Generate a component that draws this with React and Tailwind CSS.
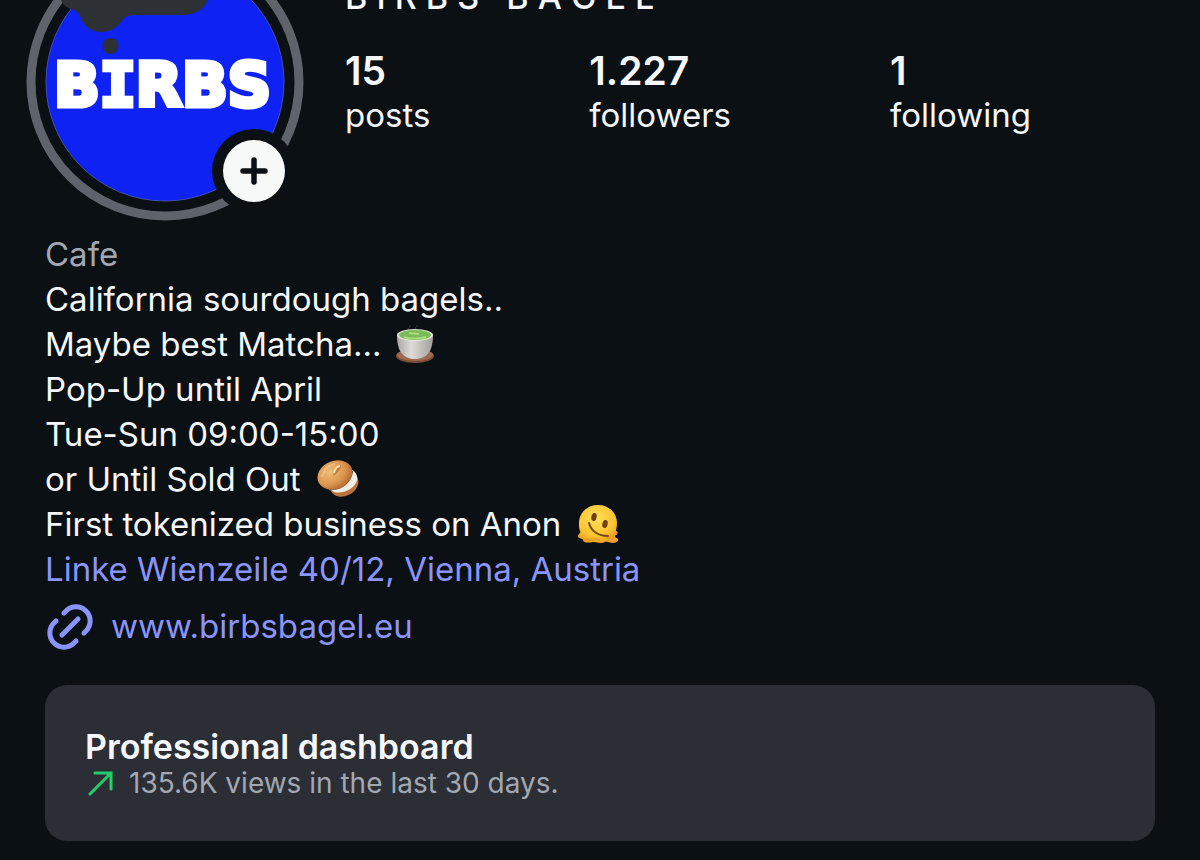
import React from 'react';

const stats = [
  { value: '15', label: 'posts' },
  { value: '1.227', label: 'followers' },
  { value: '1', label: 'following' },
];

const MatchaIcon = () => (
  <svg viewBox="0 0 40 40" className="h-10 w-10 shrink-0" role="img" aria-label="Matcha">
    <defs>
      <linearGradient id="cup" x1="0" x2="1">
        <stop offset="0" stopColor="#a9a8a4" />
        <stop offset="0.4" stopColor="#dddcd8" />
        <stop offset="1" stopColor="#a19f9d" />
      </linearGradient>
    </defs>
    <path d="M14 5c-3-2 3-3 1-5M21 4c-2-2 2-2 1-4" fill="none" stroke="#5d6262" strokeWidth="1" opacity="0.5" />
    <ellipse cx="20" cy="31" rx="19" ry="7" fill="#7c4c36" />
    <ellipse cx="20" cy="30" rx="18" ry="6" fill="#9c6a50" />
    <path d="M2 10c0 15 5 24 18 24S38 25 38 10z" fill="url(#cup)" />
    <ellipse cx="20" cy="10" rx="18" ry="6" fill="#e3e5dd" />
    <ellipse cx="20" cy="10" rx="16" ry="5" fill="#7cba58" />
    <path d="M9 12c6 2 14 2 22 0M14 8l10 1" fill="none" stroke="#a8dc7c" strokeWidth="2" />
  </svg>
);

const BagelIcon = () => (
  <svg viewBox="0 0 42 40" className="h-10 w-[42px] shrink-0" role="img" aria-label="Bagel">
    <defs>
      <radialGradient id="crust" cx="0.4" cy="0.35" r="0.7">
        <stop offset="0" stopColor="#efbd78" />
        <stop offset="0.6" stopColor="#dc9650" />
        <stop offset="1" stopColor="#ad622c" />
      </radialGradient>
    </defs>
    <ellipse cx="27" cy="24" rx="15" ry="12" transform="rotate(-28 27 24)" fill="#b8733f" />
    <path d="M13 29c10 3 22-5 22-19 4 2 6 6 5 11-4 9-14 13-23 11z" fill="#eeece6" />
    <path d="M12 29c11 0 20-7 23-18" fill="none" stroke="#59605a" strokeWidth="3" />
    <ellipse cx="18" cy="15" rx="18" ry="14" transform="rotate(-22 18 15)" fill="url(#crust)" />
    <path d="M16 16c1-6 4-11 7-11 3 1-1 6-5 10" fill="#c57c3d" />
    <path d="M17 13c1-4 3-7 6-7" fill="none" stroke="#fae0ad" strokeWidth="2" />
    <path d="M5 17C7 9 12 5 18 4" fill="none" stroke="#f6cf95" strokeWidth="2" opacity="0.6" />
  </svg>
);

const MeltingIcon = () => (
  <svg viewBox="0 0 42 40" className="h-10 w-[42px] shrink-0" role="img" aria-label="Melting face">
    <defs>
      <radialGradient id="face" cx="0.45" cy="0.35" r="0.65">
        <stop offset="0" stopColor="#ffe05a" />
        <stop offset="0.7" stopColor="#fbc431" />
        <stop offset="1" stopColor="#eda126" />
      </radialGradient>
    </defs>
    <path d="M2 18C2 8 10 0 21 0s19 8 19 18c0 4-1 6-1 8 2 0 2 3 0 4-2 1-1 2 1 3 3 2 0 5-4 5-3 0-5-2-8-1-4 2-8 0-12 0-4 1-10 1-10-2 0-2-5-1-5-4 0-2 3-2 2-5-1-2-1-5-1-8z" fill="url(#face)" />
    <ellipse cx="17" cy="12" rx="2.6" ry="4" transform="rotate(14 17 12)" fill="#6f400c" />
    <ellipse cx="28" cy="19" rx="2.6" ry="4" transform="rotate(14 28 19)" fill="#6f400c" />
    <path d="M12 18c2 8 9 13 19 13" fill="none" stroke="#784510" strokeWidth="2" strokeLinecap="round" />
    <path d="M7 34c6 2 11-1 16 1M30 33c3 1 5 0 6-2" fill="none" stroke="#e29a22" strokeWidth="1.5" strokeLinecap="round" />
  </svg>
);

const Avatar = () => (
  <svg viewBox="0 0 278 278" className="h-[278px] w-[278px]" role="img" aria-label="Birbs profile photo">
    <circle cx="139" cy="139" r="134" fill="none" stroke="#5f646c" strokeWidth="9" />
    <circle cx="139" cy="139" r="119" fill="#0d22f3" stroke="#4450ad" strokeWidth="1" />
    {/* Note bubble */}
    <path d="M34 20h150v26c0 17-12 26-27 26H108c-6 0-10 2-13 7-4 6-11 10-20 10-10 0-17-6-20-14-2-6-6-8-10-9-7-2-11-8-11-14z" fill="#2d3136" />
    <circle cx="84.500" cy="103" r="8" fill="#2d3136" />
    <text
      x="28"
      y="163"
      fill="#fff"
      stroke="#fff"
      strokeWidth="5"
      className="font-['DejaVu_Sans',sans-serif] text-[60px] font-bold"
    >
      B<tspan className="font-['DejaVu_Sans_Mono',monospace]">I</tspan>RBS
    </text>
    <circle cx="228" cy="228" r="42" fill="#0b1014" />
  </svg>
);

const App = () => {
  return (
    <main className="flex min-h-screen flex-col overflow-hidden bg-[#0b1014] px-[45px] pb-5 font-['Inter',sans-serif] text-[#f5f7fa]">

      {/* Profile header */}
      <header className="-mt-[57px] -ml-[19px] flex items-start gap-[41px]">
        <div className="relative shrink-0">
          <Avatar />
          <button
            type="button"
            aria-label="Add to story"
            className="absolute right-[19px] bottom-[19px] flex h-[62px] w-[62px] items-center justify-center rounded-full bg-[#f7f9f9] text-[#0b1014]"
          >
            <svg viewBox="0 0 28 28" className="h-7 w-7" fill="none" stroke="currentColor" strokeWidth="5.5" strokeLinecap="round">
              <path d="M14 3v22M3 14h22" />
            </svg>
          </button>
        </div>

        <div className="pt-8">
          <h1 className="text-[34px] leading-[44px] font-medium whitespace-pre">B I R B S   B A G E L</h1>
          <dl className="mt-[30px] flex gap-[159px]">
            {stats.map((s) => (
              <div key={s.label} className="flex flex-col-reverse">
                <dt className="text-[33px] leading-[44px]">{s.label}</dt>
                <dd className="text-[39px] leading-[44px] font-semibold">{s.value}</dd>
              </div>
            ))}
          </dl>
        </div>
      </header>

      {/* Bio */}
      <section className="mt-[11px] text-[33px] leading-[45px]">
        <p className="text-[#a2a8b1]">Cafe</p>
        <p>California sourdough bagels..</p>
        <p className="flex items-center gap-3.5">Maybe best Matcha... <MatchaIcon /></p>
        <p>Pop-Up until April</p>
        <p>Tue-Sun 09:00-15:00</p>
        <p className="flex items-center gap-4">or Until Sold Out <BagelIcon /></p>
        <p className="flex items-center gap-4">First tokenized business on Anon <MeltingIcon /></p>
        <p className="text-[#8b94fa]"><a href="#location">Linke Wienzeile 40/12, Vienna, Austria</a></p>
      </section>

      <a href="#website" className="mt-2.5 flex items-center gap-[18px] self-start text-[33px] leading-[45px] text-[#8b94fa]">
        <svg viewBox="0 0 48 48" className="h-12 w-12" fill="none" stroke="currentColor" strokeWidth="5" strokeLinecap="round">
          <path d="M19 11l2-2a14 14 0 0 1 20 20l-2 2" />
          <path d="M11 19l-2 2a14 14 0 0 0 20 20l2-2" />
          <path d="M17 33L33 17" />
        </svg>
        www.birbsbagel.eu
      </a>

      {/* Professional dashboard */}
      <section className="mt-[35px] rounded-[22px] bg-[#2b2e35] px-10 py-[42px]">
        <h2 className="text-[34px] leading-10 font-semibold">Professional dashboard</h2>
        <p className="flex items-center gap-4 text-[28px] leading-8 text-[#a2a8b1]">
          <svg viewBox="0 0 28 28" className="h-7 w-7" fill="none" stroke="#22ce6b" strokeWidth="3" strokeLinecap="round">
            <path d="M5 25L26 4M10 4h16v16" />
          </svg>
          135.6K views in the last 30 days.
        </p>
      </section>

    </main>
  );
};

export default App;
